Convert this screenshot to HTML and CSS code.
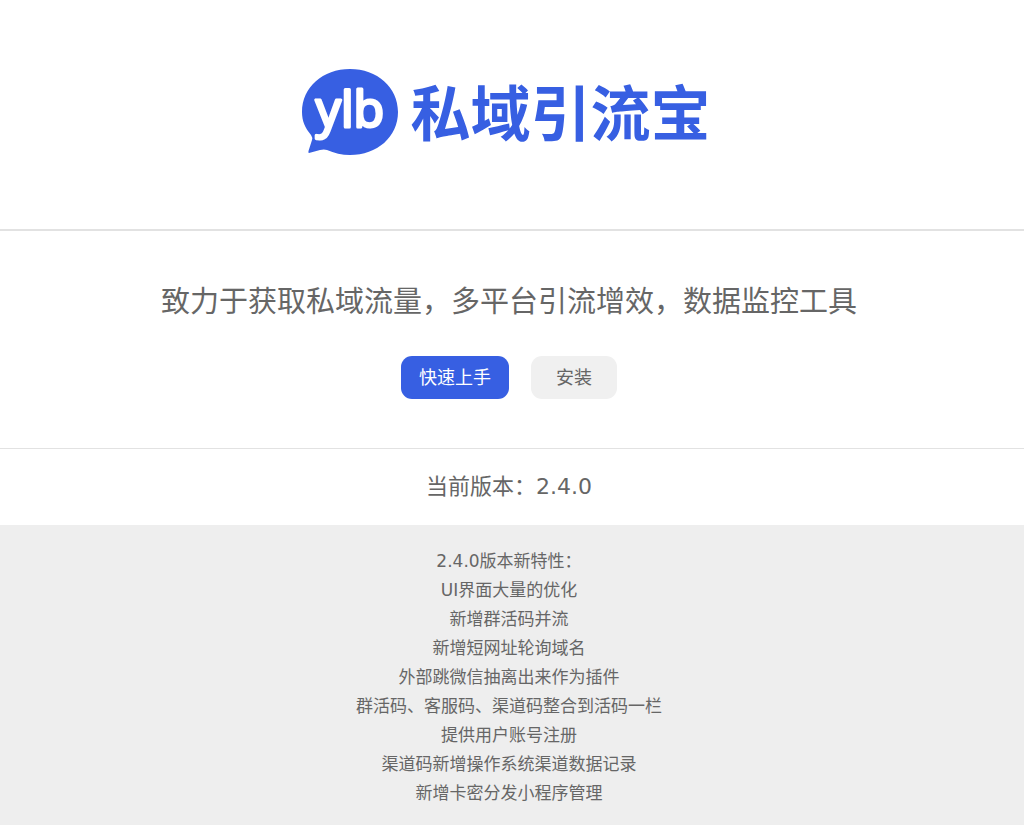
FILE: index.html
```html
<!DOCTYPE html>
<html lang="zh-CN">
<head>
    <meta charset="UTF-8">
    <meta name="viewport" content="width=device-width, initial-scale=1">
    <title>私域引流宝</title>
    <link rel="stylesheet" href="styles.css">
</head>
<body>
    <header class="header">
        <svg class="logo" width="96" height="88" viewBox="0 0 96 88" aria-hidden="true">
            <path d="M48 1C75 1 96 19 96 44S75 87 48 87C40 87 32 85 25 82Q22 81 18 82L7 85Q6 85 6.500 83L10 72Q11 70 9 67C3 60 0 53 0 44C0 19 21 1 48 1Z" fill="#375fe2"/>
            <text class="logo-text" x="48" y="59" text-anchor="middle">ylb</text>
        </svg>
        <h1>私域引流宝</h1>
    </header>

    <section class="intro">
        <p>致力于获取私域流量，多平台引流增效，数据监控工具</p>
        <div class="actions">
            <button class="button primary" type="button">快速上手</button>
            <button class="button" type="button">安装</button>
        </div>
    </section>

    <section class="version">
        <h2>当前版本：2.4.0</h2>
    </section>

    <section class="features">
        <p>2.4.0版本新特性：</p>
        <ul>
            <li>UI界面大量的优化</li>
            <li>新增群活码并流</li>
            <li>新增短网址轮询域名</li>
            <li>外部跳微信抽离出来作为插件</li>
            <li>群活码、客服码、渠道码整合到活码一栏</li>
            <li>提供用户账号注册</li>
            <li>渠道码新增操作系统渠道数据记录</li>
            <li>新增卡密分发小程序管理</li>
        </ul>
    </section>
</body>
</html>
```
FILE: styles.css
```css
:root {
    --primary-color: #375fe2;
    --text-color: #666666;
    --border: #e2e2e2;
    --surface: #eeeeee;
    --button: #f0f0f0;
}

* {
    margin: 0;
    padding: 0;
    box-sizing: border-box;
}

body {
    font-family: "DejaVu Sans", "Noto Sans CJK SC", sans-serif;
    color: var(--text-color);
    background-color: #ffffff;
    text-align: center;
}

.header,
.intro,
.version,
.features {
    padding-right: 6px;
}

.header {
    display: flex;
    justify-content: center;
    align-items: flex-start;
    gap: 13px;
    padding-top: 68px;
    padding-bottom: 73px;
    padding-right: 12px;
    border-bottom: 2px solid var(--border);
}

.logo-text {
    font-family: "Open Sans", sans-serif;
    font-size: 50px;
    font-weight: 400;
    fill: #ffffff;
    stroke: #ffffff;
    stroke-width: 3px;
    stroke-linejoin: round;
}

.header h1 {
    font-family: "Noto Sans CJK SC", sans-serif;
    font-size: 60px;
    font-weight: 700;
    line-height: 84px;
    color: var(--primary-color);
}

.intro {
    padding-top: 49px;
    padding-bottom: 49px;
    border-bottom: 1px solid var(--border);
}

.intro p {
    font-size: 29px;
    line-height: 44px;
}

.actions {
    display: flex;
    justify-content: center;
    gap: 22px;
    margin-top: 32px;
}

.button {
    padding: 0 25px;
    border: none;
    border-radius: 11px;
    background-color: var(--button);
    color: var(--text-color);
    font-family: inherit;
    font-size: 18px;
    line-height: 43px;
    cursor: pointer;
}

.button.primary {
    padding: 0 18px;
    background-color: var(--primary-color);
    color: #ffffff;
}

.version h2 {
    font-size: 22px;
    font-weight: 400;
    line-height: 76px;
}

.features {
    min-height: 300px;
    padding-top: 22px;
    padding-bottom: 16px;
    background-color: var(--surface);
    font-size: 17px;
    line-height: 29px;
}

.features ul {
    list-style: none;
}
```
